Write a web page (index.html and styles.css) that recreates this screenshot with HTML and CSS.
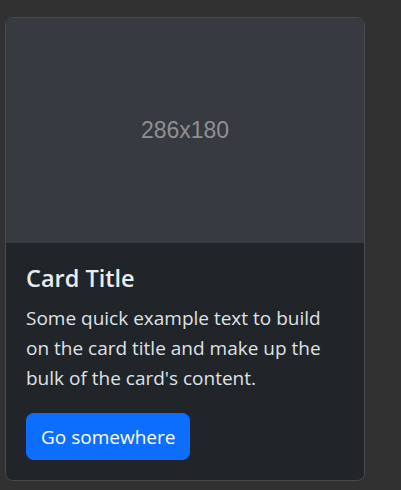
FILE: index.html
```html
<!DOCTYPE html>
<html>
<head>
<meta charset="utf-8">
<link rel="stylesheet" href="styles.css">
</head>
<body>
<div class="card">
  <div class="card-img">
    <svg width="358" height="225" viewBox="0 0 358 225" xmlns="http://www.w3.org/2000/svg">
      <rect width="358" height="225" fill="#373a40"/>
      <text x="179" y="114" text-anchor="middle" dominant-baseline="middle" class="ph-text">286x180</text>
    </svg>
  </div>
  <div class="card-body">
    <h5 class="card-title">Card Title</h5>
    <p class="card-text">Some quick example text to build on the card title and make up the bulk of the card's content.</p>
    <a class="btn" href="#">Go somewhere</a>
  </div>
</div>
</body>
</html>
```

FILE: styles.css
```css
html, body {
  margin: 0;
  padding: 0;
  background: #313131;
}
body {
  padding: 17px 0 0 5px;
  font-family: "Open Sans", "Noto Sans", sans-serif;
  color: #dee2e6;
}
.card {
  width: 358px;
  border: 1px solid #484b50;
  border-radius: 7.5px;
  background: #212529;
  overflow: hidden;
}
.card-img svg {
  display: block;
}
.ph-text {
  font-family: "Liberation Sans", Arial, sans-serif;
  font-size: 23px;
  fill: #8e9092;
}
.card-body {
  padding: 20px;
}
.card-title {
  margin: 0 0 10px;
  font-size: 23.5px;
  font-weight: 600;
  line-height: 30px;
  color: #e9ecef;
}
.card-text {
  margin: 0 0 20px;
  font-size: 19px;
  line-height: 30px;
}
.btn {
  display: inline-block;
  padding: 7.5px 14px;
  border: 1px solid #0d6efd;
  border-radius: 7.5px;
  background: #0d6efd;
  color: #fff;
  font-size: 19px;
  line-height: 30px;
  text-decoration: none;
}
```
